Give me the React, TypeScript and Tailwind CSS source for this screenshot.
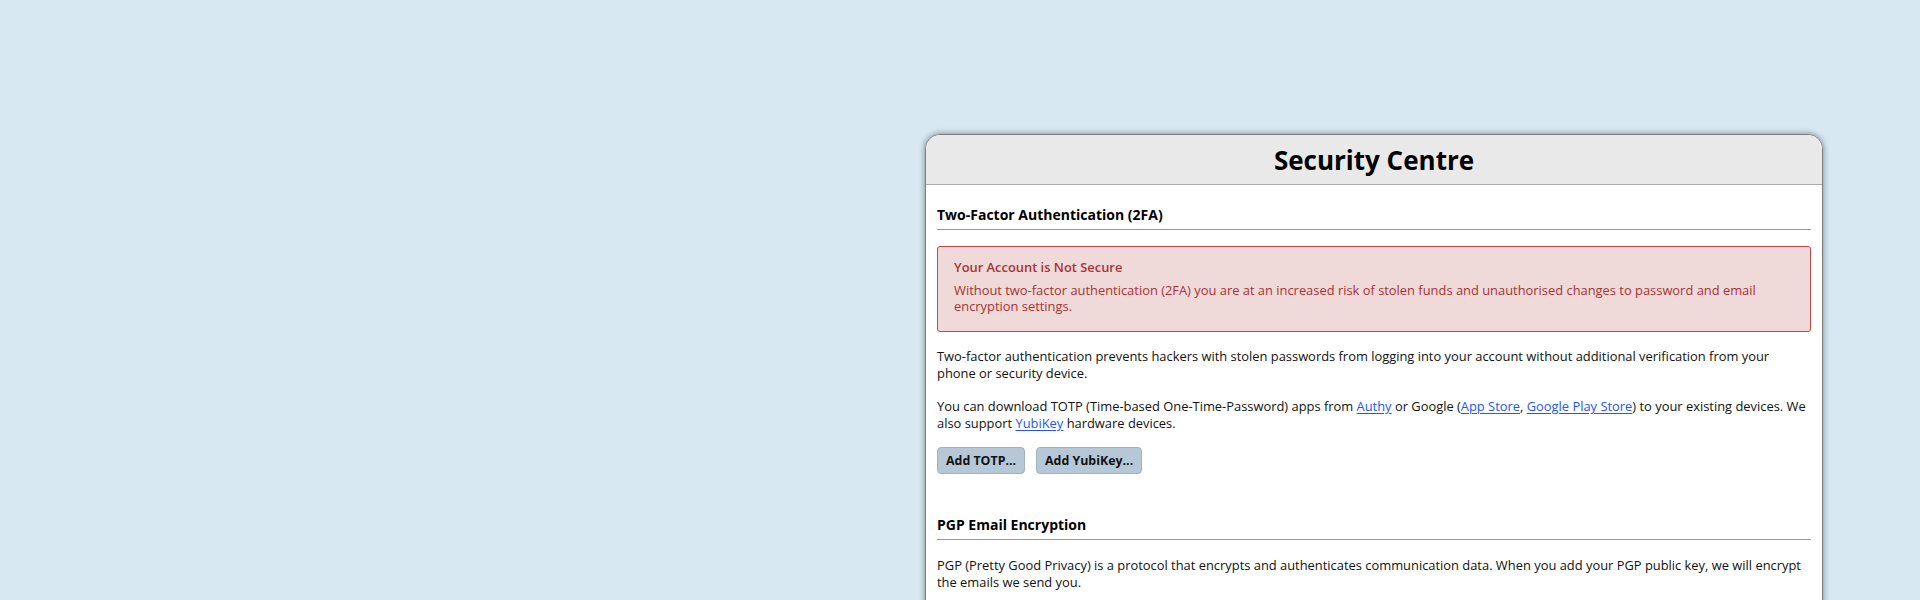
import React from "react";

const font = { fontFamily: '"Open Sans", "Noto Sans", sans-serif' };

function Link({ children }: { children: React.ReactNode }) {
  return (
    <a href="#" className="text-[#2257ef] underline underline-offset-2">
      {children}
    </a>
  );
}

function Button({ children }: { children: React.ReactNode }) {
  return (
    <button className="h-[27px] px-2 rounded-[4px] border border-[#9fb2c3] bg-[#b6c8d7] text-[12.4px] font-bold text-[#111] leading-none">
      {children}
    </button>
  );
}

function SectionHeading({ children }: { children: React.ReactNode }) {
  return (
    <h2 className="text-[14px] leading-[20px] font-bold text-black pb-[4px] border-b border-[#999]">
      {children}
    </h2>
  );
}

export default function App() {
  return (
    <div className="min-h-[600px] h-[600px] w-full bg-[#d7e8f2] pt-[134px] pl-[925px] overflow-hidden" style={font}>
      <div className="w-[898px] h-[520px] bg-white border border-[#7d7d7d] rounded-t-[15px] shadow-[0_0_6px_rgba(0,0,0,0.45)] overflow-hidden">
        <div className="h-[50px] bg-[#e9e9e9] border-b border-[#aaaaaa] flex items-center justify-center">
          <h1 className="text-[26px] font-bold text-black leading-none">Security Centre</h1>
        </div>
        <div className="px-[11px] pt-[20px] text-[12.9px] leading-[16.7px] text-[#111]">
          <SectionHeading>Two-Factor Authentication (2FA)</SectionHeading>
          <div className="mt-[16px] rounded-[3px] border border-[#c24848] bg-[#f0d9d9] pl-[16px] pr-4 pt-[12px] pb-[16px] text-[#a93333]">
            <div className="font-semibold">Your Account is Not Secure</div>
            <p className="mt-[6px]">
              Without two-factor authentication (2FA) you are at an increased risk of stolen funds and unauthorised changes to password and email encryption settings.
            </p>
          </div>
          <p className="mt-[16px]">
            Two-factor authentication prevents hackers with stolen passwords from logging into your account without additional verification from your phone or security device.
          </p>
          <p className="mt-[16.5px]">
            You can download TOTP (Time-based One-Time-Password) apps from <Link>Authy</Link> or Google (<Link>App Store</Link>, <Link>Google Play Store</Link>) to your existing devices. We also support <Link>YubiKey</Link> hardware devices.
          </p>
          <div className="mt-[16px] flex gap-[11px]">
            <Button>Add TOTP...</Button>
            <Button>Add YubiKey...</Button>
          </div>
          <div className="mt-[41px]">
            <SectionHeading>PGP Email Encryption</SectionHeading>
          </div>
          <p className="mt-[16.5px]">
            PGP (Pretty Good Privacy) is a protocol that encrypts and authenticates communication data. When you add your PGP public key, we will encrypt the emails we send you.
          </p>
        </div>
      </div>
    </div>
  );
}
